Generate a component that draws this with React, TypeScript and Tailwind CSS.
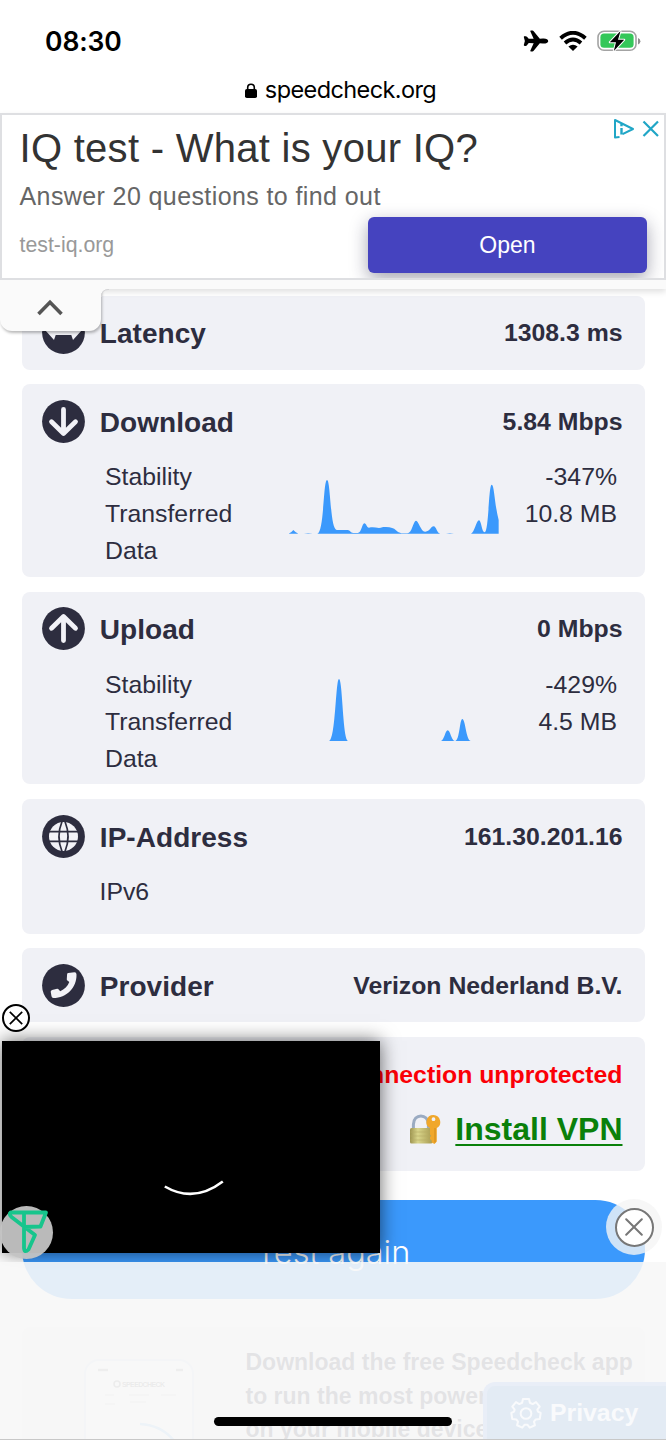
import type { ReactNode } from 'react';
import { IoAirplane } from 'react-icons/io5';

const DOWNLOAD_PATH =
  'M25 221 Q33 219 40 210 Q48 219 55 221 Z M72 221 Q84 218 98 221 Z M112 221 C132 219 130 60 141 60 C152 60 150 206 170 210 H203 C211 210 211 219 220 219 H233 C245 219 246 190 253 190 C259 190 260 203 267 203 C276 201 286 202 297 204 C306 202 312 200 318 201 Q340 202 347 210 Q355 219 364 220 H382 C396 220 400 182 408 182 C416 182 422 214 435 215 C449 216 452 199 461 199 C469 199 471 221 481 221 Z M498 221 Q509 218 522 221 Z M573 221 C583 219 589 181 597 181 C604 181 605 217 614 217 C626 217 626 74 635 74 C643 74 643 130 656 180 V221 Z';

const UPLOAD_PATH =
  'M147 843 C167 840 167 657 177 657 C188 657 188 841 205 843 Z M483 843 C493 840 496 811 503 811 C511 811 513 840 524 843 Z M526 843 C539 840 539 777 547 777 C556 777 558 839 572 843 Z';

function CircleIcon({ children }: { children: ReactNode }) {
  return (
    <svg viewBox="-21.5 -21.5 43 43" className="h-[43px] w-[43px] shrink-0">
      <circle r="21.4" fill="#2d2d3f" />
      {children}
    </svg>
  );
}

function ArrowIcon({ up = false }: { up?: boolean }) {
  return (
    <CircleIcon>
      <g
        transform={up ? 'scale(1 -1)' : undefined}
        fill="none"
        stroke="#f2f2f7"
        strokeWidth="4.8"
        strokeLinecap="round"
        strokeLinejoin="round"
      >
        <path d="M0 -12V10M-12 0.3L0 12L12 0.3" />
      </g>
    </CircleIcon>
  );
}

function GlobeIcon() {
  return (
    <CircleIcon>
      <circle r="14.5" fill="#f2f2f7" />
      <g fill="none" stroke="#2d2d3f" strokeWidth="1.7">
        <path d="M-15 -4.8H15M-15 4.8H15" />
        <path d="M-1.5 -15Q-7.6 0 -1.5 15M1.5 -15Q7.6 0 1.5 15" />
      </g>
    </CircleIcon>
  );
}

function LatencyIcon() {
  return (
    <CircleIcon>
      <path d="M-18 -2L-9.5 -11.5V-6.5H9.5V-11.5L18 -2L9.5 7.5L7.8 2.6H-7.8L-9.5 7.5Z" fill="#f2f2f7" />
    </CircleIcon>
  );
}

function PhoneIcon() {
  return (
    <CircleIcon>
      <path
        d="M4.6 -12.4L11 -13.2Q13 -13.2 13 -11C13.4 2 3 12.6 -10 12.6Q-11.8 12.6 -12 10.8L-12.8 6.2Q-12.8 4.8 -11.4 4.4L-6.4 3.2Q-5.4 3.1 -4.8 3.9L-3.3 5.8C1 4 4.2 0.8 5.8 -3.4L3.9 -4.9Q3.1 -5.6 3.3 -6.6L3.6 -11.2Q3.8 -12.3 4.6 -12.4Z"
        fill="#f2f2f7"
      />
    </CircleIcon>
  );
}

function CardHeader({ icon, title, value }: { icon: ReactNode; title: string; value: string }) {
  return (
    <div className="flex h-[74px] items-center pr-[22px] pl-[20.5px]">
      {icon}
      <h2 className="ml-[14.8px] pt-[3px] text-[28px] leading-none font-bold tracking-[0.05px]">{title}</h2>
      <span className="ml-auto pt-[2px] text-[24.8px] leading-none font-bold">{value}</span>
    </div>
  );
}

function SpeedDetails({
  stability,
  transferred,
  path,
  viewBox,
}: {
  stability: string;
  transferred: string;
  path: string;
  viewBox: string;
}) {
  return (
    <div className="flex h-[111px] pr-[27.5px] pl-[83.5px] text-[24.8px] leading-[37px]">
      <div className="w-[183.5px]">
        <p>Stability</p>
        <p>Transferred</p>
        <p>Data</p>
      </div>
      <svg viewBox={viewBox} className="mt-[0.5px] h-[111px] w-[210px] shrink-0">
        <path d={path} fill="#3b99fc" />
      </svg>
      <div className="ml-auto text-right">
        <p>{stability}</p>
        <p>{transferred}</p>
      </div>
    </div>
  );
}

function StatusBar() {
  return (
    <div className="flex h-[66px] items-center pt-4 pr-[25px] pl-[45px]">
      <span className="font-[Inter] text-[26.5px] leading-none font-semibold tracking-[-0.1px]">08:30</span>
      <div className="ml-auto flex items-center">
        <IoAirplane className="h-[26px] w-[26px]" />
        <svg viewBox="0 0 28 20" className="ml-[10px] h-[20px] w-[28px]">
          <g fill="none" stroke="#000" strokeWidth="3.9">
            <path d="M1.6 7.2Q14 -3.6 26.4 7.2" />
            <path d="M6 11.9Q14 5.1 22 11.9" />
          </g>
          <path d="M9.4 15.5Q14 11.8 18.6 15.5L14 19.9Z" />
        </svg>
        <svg viewBox="0 0 44 22" className="ml-[10px] h-[22px] w-[44px]">
          <rect x="1" y="1.2" width="38" height="19" rx="6" fill="#fff" stroke="#a3a3a3" strokeWidth="1.6" />
          <rect x="3.4" y="3.6" width="33.2" height="14.2" rx="3.6" fill="#34c759" />
          <path d="M41 8v6.4q2.4-.9 2.4-3.2T41 8Z" fill="#8e8e8e" />
          <path
            d="M23.5 1L12.8 12.2H19L16.8 21L27.2 9.8H21Z"
            fill="#000"
            stroke="#fff"
            strokeWidth="2"
            paintOrder="stroke"
            strokeLinejoin="round"
          />
        </svg>
      </div>
    </div>
  );
}

function AdBanner() {
  return (
    <section className="relative h-[167px] overflow-hidden border-2 border-[#dedfe2] bg-white pt-[10px] pl-[17.5px] whitespace-nowrap">
      <h1 className="text-[40px] leading-[46px] tracking-[0.28px] text-[#333]">IQ test - What is your IQ?</h1>
      <p className="mt-[10px] text-[25px] leading-[30px] tracking-[0.4px] text-[#666]">Answer 20 questions to find out</p>
      <p className="mt-[20.5px] text-[21.3px] leading-[26px] text-[#999]">test-iq.org</p>
      <button className="absolute top-[102px] left-[366px] h-[56px] w-[279px] rounded-md bg-[#4543bf] text-center text-[23px] text-white shadow-[0_6px_18px_rgba(30,30,60,0.4)]">
        Open
      </button>
      <svg viewBox="0 0 50 24" className="absolute top-[2px] left-[610px] h-[24px] w-[50px]" fill="none" stroke="#20a6c6" strokeWidth="2">
        <path d="M7.5 20L3 20.5V3L21 12L10.5 17.2" strokeLinejoin="round" />
        <path d="M9.5 11V17.5M9.5 7V9.2" strokeWidth="2.4" />
        <path d="M31.5 4.5L46 19M46 4.5L31.5 19" strokeWidth="2.2" />
      </svg>
    </section>
  );
}

function LockKeyEmoji() {
  return (
    <svg viewBox="0 0 32 32" className="mt-[3px] h-[32px] w-[32px]">
      <defs>
        <linearGradient id="lockBody" x1="0" x2="1">
          <stop offset="0" stopColor="#9d9450" />
          <stop offset="0.35" stopColor="#d9d58b" />
          <stop offset="1" stopColor="#a79a50" />
        </linearGradient>
      </defs>
      <path d="M4.4 16V10.5C4.4 -1 19.4 -1 19.4 10.5V16" fill="none" stroke="#9aabc2" strokeWidth="3" />
      <rect x="1" y="14" width="22.5" height="15.5" rx="1.6" fill="url(#lockBody)" />
      <path d="M1.5 18H23M1.5 22H23M1.5 26H23" stroke="#b5ad66" strokeWidth="0.6" />
      <path
        fillRule="evenodd"
        d="M24.5 1a7 7 0 0 1 3.3 13V27.5L25.5 30L22.7 28.5V26.5L21 25V23L22.3 22L21 20.5V14.1A7 7 0 0 1 24.5 1ZM24.5 3.3a1.9 1.9 0 1 0 0 3.8a1.9 1.9 0 0 0 0-3.8Z"
        fill="#f0a72b"
      />
      <path d="M26 14V28.5" stroke="#d08a1c" strokeWidth="1" />
    </svg>
  );
}

function GearIcon() {
  return (
    <svg viewBox="0 0 24 24" className="h-[32px] w-[32px]" fill="none" stroke="#f9fafc" strokeWidth="1.5" strokeLinejoin="round">
      <path d="M9.7 1.5H14.3L14.9 4.3L17 5.3L19.5 3.8L22.3 7.3L20.5 9.5L21 11L23 12L22.3 16.5L19.3 16.8L18 18.5L18.7 21.2L14.8 23L13 20.8H11L9.2 23L5.3 21.2L6 18.5L4.7 16.8L1.7 16.5L1 12L3 11L3.5 9.5L1.7 7.3L4.5 3.8L7 5.3L9.1 4.3Z" />
      <circle cx="12" cy="12.4" r="4" />
    </svg>
  );
}

function AppPromo() {
  return (
    <section className="mt-7 flex h-[120px] rounded-lg bg-[#f0f0f5]">
      <svg viewBox="0 0 224 120" className="h-[120px] w-[224px] shrink-0">
        <rect x="63" y="33" width="108" height="180" rx="14" fill="#fff" stroke="#cfe0f5" strokeWidth="2" />
        <path d="M76 43H86M154 43H161" stroke="#999" strokeWidth="2.5" />
        <circle cx="95" cy="57" r="3" fill="none" stroke="#888" strokeWidth="1.5" />
        <text x="100" y="59.5" fontSize="7" fontWeight="700" fill="#777" textLength="43">
          SPEEDCHECK
        </text>
        <path d="M83 68H92M107 68H127M139 68H154M83 77H93M108 75H124" stroke="#ddd" strokeWidth="2" />
        <path d="M118 97Q140 98 153 115" fill="none" stroke="#8cc6f8" strokeWidth="2.5" />
      </svg>
      <p className="pt-[19px] text-[23px] leading-[33.5px] font-bold whitespace-nowrap">
        Download the free Speedcheck app
        <br />
        to run the most powerful test
        <br />
        on your mobile device
      </p>
    </section>
  );
}

export default function App() {
  return (
    <div className="relative flex h-[1440px] w-[666px] flex-col overflow-hidden bg-white font-['Liberation_Sans',Arial,sans-serif] text-[#2d2d3f]">
      <header className="h-[113px] shrink-0 text-black">
        <StatusBar />
        <div className="flex h-[47px] items-center justify-center pt-px pl-[15px]">
          <svg viewBox="0 0 12 15" className="mr-2 h-[15px] w-[12px]">
            <rect y="6" width="12" height="9" rx="1.8" />
            <path d="M2.7 7V4.5a3.3 3.3 0 0 1 6.6 0V7" fill="none" stroke="#000" strokeWidth="1.6" />
          </svg>
          <span className="font-[Inter] text-[23.5px] leading-none tracking-[-0.6px]">speedcheck.org</span>
        </div>
      </header>

      {/* Top ad with collapse tab */}
      <div className="relative z-10 h-[176px] shrink-0 bg-[#fafafa] shadow-[0_3px_6px_rgba(0,0,0,0.12)]">
        <AdBanner />
        <div className="absolute top-[168px] left-0 flex h-[50px] w-[101px] justify-center rounded-b-xl bg-[#fafafa] pt-[18px] pr-[2px] shadow-[1px_2px_3px_rgba(0,0,0,0.28)]">
          <svg viewBox="0 0 26 17" className="h-[17px] w-[26px]">
            <path d="M1.5 15L13 3.3L24.5 15" fill="none" stroke="#555" strokeWidth="3.6" />
          </svg>
        </div>
        <div className="absolute top-[167px] left-0 h-[9px] w-[120px] bg-[#fafafa]" />
        {/* Inner corner where the tab meets the strip */}
        <svg viewBox="0 0 8 8" className="absolute top-[176px] left-[101px] h-[8px] w-[8px]">
          <path d="M0 0H8Q0 0 0 8Z" fill="#fafafa" />
          <path d="M8 0.4Q0.4 0.4 0.4 8" fill="none" stroke="#d4d4d6" strokeWidth="1" />
        </svg>
      </div>

      <main className="flex shrink-0 flex-col gap-[14.6px] pt-[6.5px] pr-[21.5px] pl-[21.5px]">
        <section className="h-[74.2px] rounded-lg bg-[#f0f1f6]">
          <CardHeader icon={<LatencyIcon />} title="Latency" value="1308.3 ms" />
        </section>

        <section className="h-[192.8px] rounded-lg bg-[#f0f1f6]">
          <CardHeader icon={<ArrowIcon />} title="Download" value="5.84 Mbps" />
          <SpeedDetails stability="-347%" transferred="10.8 MB" path={DOWNLOAD_PATH} viewBox="27 -3 630 333" />
        </section>

        <section className="h-[192.8px] rounded-lg bg-[#f0f1f6]">
          <CardHeader icon={<ArrowIcon up />} title="Upload" value="0 Mbps" />
          <SpeedDetails stability="-429%" transferred="4.5 MB" path={UPLOAD_PATH} viewBox="27 618 630 333" />
        </section>

        <section className="h-[134.5px] rounded-lg bg-[#f0f1f6]">
          <CardHeader icon={<GlobeIcon />} title="IP-Address" value="161.30.201.16" />
          <p className="pl-[78px] text-[24.8px] leading-[37px]">IPv6</p>
        </section>

        <section className="h-[74.2px] rounded-lg bg-[#f0f1f6]">
          <CardHeader icon={<PhoneIcon />} title="Provider" value="Verizon Nederland B.V." />
        </section>

        <section className="flex h-[134.5px] flex-col items-end rounded-lg bg-[#f0f1f6] pr-[22px] font-bold">
          <p className="h-[74px] pt-px text-[24.8px] leading-[74px] text-[#fb0007]">Connection unprotected</p>
          <div className="flex items-center gap-[14px]">
            <LockKeyEmoji />
            <a className="text-[32px] leading-[36px] text-[#0a800a] underline decoration-2 underline-offset-4">Install VPN</a>
          </div>
        </section>

        <div>
          <button className="mt-[14px] h-[99px] w-full rounded-full bg-[#3b99fc] pt-2 font-[Inter] text-[32.5px] font-light text-white">
            Test again
          </button>
          <AppPromo />
        </div>
      </main>

      {/* Floating video player */}
      <div className="absolute top-[1041px] left-[2px] h-[212px] w-[378px] bg-black shadow-[0_0_18px_rgba(0,0,0,0.6)]">
        <svg viewBox="0 0 62 18" className="absolute top-[137px] left-[161px] h-[18px] w-[62px]">
          <path d="M1.8 8.5Q31 25.5 59.8 3.5" fill="none" stroke="#fff" strokeWidth="2.6" />
        </svg>
      </div>

      <div className="absolute top-[1004px] left-[2px] flex h-[28px] w-[28px] items-center justify-center rounded-full border-2 border-black bg-white">
        <svg viewBox="0 0 14 14" className="h-[14px] w-[14px]" stroke="#000" strokeWidth="1.7">
          <path d="M0.8 0.8L13.2 13.2M13.2 0.8L0.8 13.2" />
        </svg>
      </div>

      {/* Translucent browser toolbar */}
      <div className="absolute top-[1262px] left-0 h-[178px] w-full border-b border-[#c8c8c8] bg-[#f7f7f7]/90">
        <div className="absolute top-[120px] right-0 flex h-[57px] w-[183px] items-center gap-2 rounded-tl-xl border-t-4 border-l-4 border-[#e9eef7] bg-[#e3ebf4] pl-[23px]">
          <GearIcon />
          <span className="text-[24.8px] font-bold text-[#f9fafc]">Privacy</span>
        </div>
        <div className="absolute top-[155px] left-[214px] h-[9px] w-[238px] rounded-full bg-black" />
      </div>

      <div className="absolute top-[1206px] left-0 h-[53px] w-[53px] rounded-full bg-[#c4c4c4]/95">
        <svg viewBox="0 0 53 53" className="h-[53px] w-[53px]" fill="none" stroke="#17c58c" strokeWidth="3.8" strokeLinejoin="round">
          <path d="M24 6.5V21L40.5 20.5L46 6.5H10.5Q8.5 8 11.5 11L35 29L28.5 43.5Q24.5 47.5 24 42V21" />
        </svg>
      </div>

      <div className="absolute top-[1199px] left-[606px] flex h-[56px] w-[56px] items-center justify-center rounded-full bg-[#f5f5f5]/80">
        <div className="flex h-[39px] w-[39px] items-center justify-center rounded-full border-2 border-[#777] bg-white">
          <svg viewBox="0 0 18 18" className="h-[18px] w-[18px]" stroke="#777" strokeWidth="2" strokeLinecap="round">
            <path d="M1.2 1.2L16.8 16.8M16.8 1.2L1.2 16.8" />
          </svg>
        </div>
      </div>
    </div>
  );
}
